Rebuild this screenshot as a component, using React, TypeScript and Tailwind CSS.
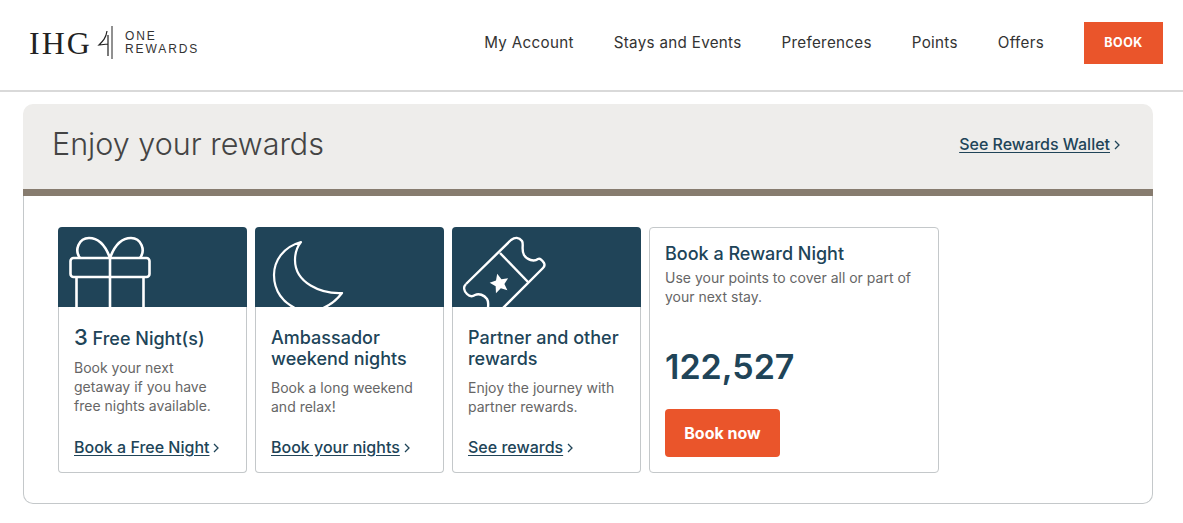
const font = "font-['Inter','Liberation_Sans',sans-serif]";

const Chevron = () => (
  <svg width="6" height="10" viewBox="0 0 6 10" fill="none" stroke="currentColor" strokeWidth="1.3" className="ml-[4px] mt-[2px] shrink-0">
    <path d="M1 1l4 4-4 4" />
  </svg>
);

const Gift = () => (
  <svg width="189" height="80" viewBox="0 0 189 80" fill="none" stroke="white" strokeWidth="2.6" strokeLinejoin="round">
    <rect x="12.5" y="31" width="79" height="19" rx="3" />
    <path d="M18.5 50v30M85.5 50v30M52 31v49" />
    <path d="M52 31C48 20 41 11 31 11C21 11 16 23 22 31" />
    <path d="M52 31C56 20 63 11 73 11C83 11 88 23 82 31" />
  </svg>
);

const Moon = () => (
  <svg width="189" height="80" viewBox="0 0 189 80" fill="none" stroke="white" strokeWidth="2.2" strokeLinejoin="round">
    <path d="M46 15C28 20 19 34 19 48C19 64 28 76 42 82C62 88 78 78 87 66C66 67 40 56 40 33C40 26 42 20 46 15Z" />
  </svg>
);

const Ticket = () => (
  <svg width="189" height="80" viewBox="0 0 189 80" fill="none" stroke="white" strokeWidth="2.4" strokeLinejoin="round">
    <path d="M14 57L59 13C63 10 67 10 70 14C72 17 69 23 72 28C75 33 82 35 86 32C88 31 90 33 92 36C93 38 92 40 91 41L50 82" />
    <path d="M14 57C11 60 12 64 15 67C17 69 20 70 23 68C27 66 32 68 35 72C37 75 36 78 36 82" />
    <path d="M48 26L76 55" />
    <path d="M47.5 46.5L50.3 52.8L57 53.5L52 58.2L53.4 65L47.5 61.5L41.6 65L43 58.2L38 53.5L44.7 52.8Z" fill="white" stroke="none" transform="rotate(-14 47.5 56)" />
  </svg>
);

const Logo = () => (
  <div className="flex items-center">
    <span className="font-['Liberation_Serif',serif] text-[32px] leading-none tracking-[2px] text-[#222] w-[61px]">IHG</span>
    <svg width="24" height="36" viewBox="0 0 24 36" fill="none" stroke="#222" className="ml-[5px]">
      <path d="M17 1v33" strokeWidth="1" />
      <path d="M12 6C11 13 8 16 4 20L13 19M13 10V31" strokeWidth="1.2" />
    </svg>
    <div className="ml-[6px] font-['Liberation_Sans',sans-serif] text-[12px] leading-[13px] tracking-[1.9px] text-[#333]">
      <div>ONE</div>
      <div>REWARDS</div>
    </div>
  </div>
);

const nav = ['My Account', 'Stays and Events', 'Preferences', 'Points', 'Offers'];

const cards = [
  {
    icon: <Gift />,
    title: (
      <>
        <span className="text-[22px]">3</span> Free Night(s)
      </>
    ),
    desc: 'Book your next getaway if you have free nights available.',
    link: 'Book a Free Night',
  },
  {
    icon: <Moon />,
    title: 'Ambassador weekend nights',
    desc: 'Book a long weekend and relax!',
    link: 'Book your nights',
  },
  {
    icon: <Ticket />,
    title: 'Partner and other rewards',
    desc: 'Enjoy the journey with partner rewards.',
    link: 'See rewards',
  },
];

export default function App() {
  return (
    <div className={`${font} w-[1183px] h-[523px] bg-white overflow-hidden`}>
      <header className="h-[92px] border-b-2 border-[#d9d9d9] flex items-center pl-[29px] pr-[20px] pb-[5px]">
        <Logo />
        <nav className="ml-auto flex items-center gap-[40px] text-[15.2px] text-[#333] tracking-[0.3px]">
          {nav.map((n) => (
            <span key={n} className="mt-[1px]">{n}</span>
          ))}
          <span className="w-[79px] h-[42px] pt-[2px] bg-[#ea552b] text-white text-[12.5px] font-bold flex items-center justify-center tracking-[0.5px]">
            BOOK
          </span>
        </nav>
      </header>

      <main className="w-[1130px] ml-[23px] mt-[12px]">
        <div className="h-[85px] bg-[#eeedeb] rounded-t-[10px] flex items-center justify-between pl-[29px] pr-[33px] pb-[5px]">
          <h1 className="text-[30.5px] font-light text-[#444]">Enjoy your rewards</h1>
          <a className="flex items-center text-[16px] font-medium text-[#204458]">
            <span className="underline underline-offset-2">See Rewards Wallet</span>
            <Chevron />
          </a>
        </div>
        <div className="h-[7px] bg-[#877c6f]" />
        <div className="h-[308px] border border-t-0 border-[#c4c8ca] rounded-b-[10px] flex gap-[8px] pl-[34px] pt-[31px]">
          {cards.map((c) => (
            <div key={c.link} className="w-[189px] h-[246px] flex flex-col">
              <div className="h-[80px] bg-[#204458] rounded-t-[4px] overflow-hidden shrink-0">{c.icon}</div>
              <div className="flex-1 flex flex-col border border-t-0 border-[#c4c8ca] rounded-b-[4px] pl-[15px] pr-[14px] pt-[20px] pb-[13px]">
                <h2 className="text-[18px] leading-[21px] font-medium text-[#204458]">{c.title}</h2>
                <p className="mt-[9px] text-[14px] leading-[19px] text-[#666]">{c.desc}</p>
                <a className="mt-auto flex items-center text-[16px] font-medium text-[#204458]">
                  <span className="underline underline-offset-2">{c.link}</span>
                  <Chevron />
                </a>
              </div>
            </div>
          ))}
          <div className="w-[290px] h-[246px] border border-[#c4c8ca] rounded-[4px] px-[15px] pt-[15px]">
            <h2 className="text-[18px] leading-[21px] font-medium text-[#204458]">Book a Reward Night</h2>
            <p className="mt-[4px] text-[14px] leading-[19px] text-[#666]">Use your points to cover all or part of your next stay.</p>
            <div className="mt-[39px] text-[34px] leading-[44px] font-semibold text-[#204458]">122,527</div>
            <button className="mt-[20px] w-[115px] h-[48px] bg-[#ea552b] rounded-[4px] text-white text-[16px] font-bold">Book now</button>
          </div>
        </div>
      </main>
    </div>
  );
}
